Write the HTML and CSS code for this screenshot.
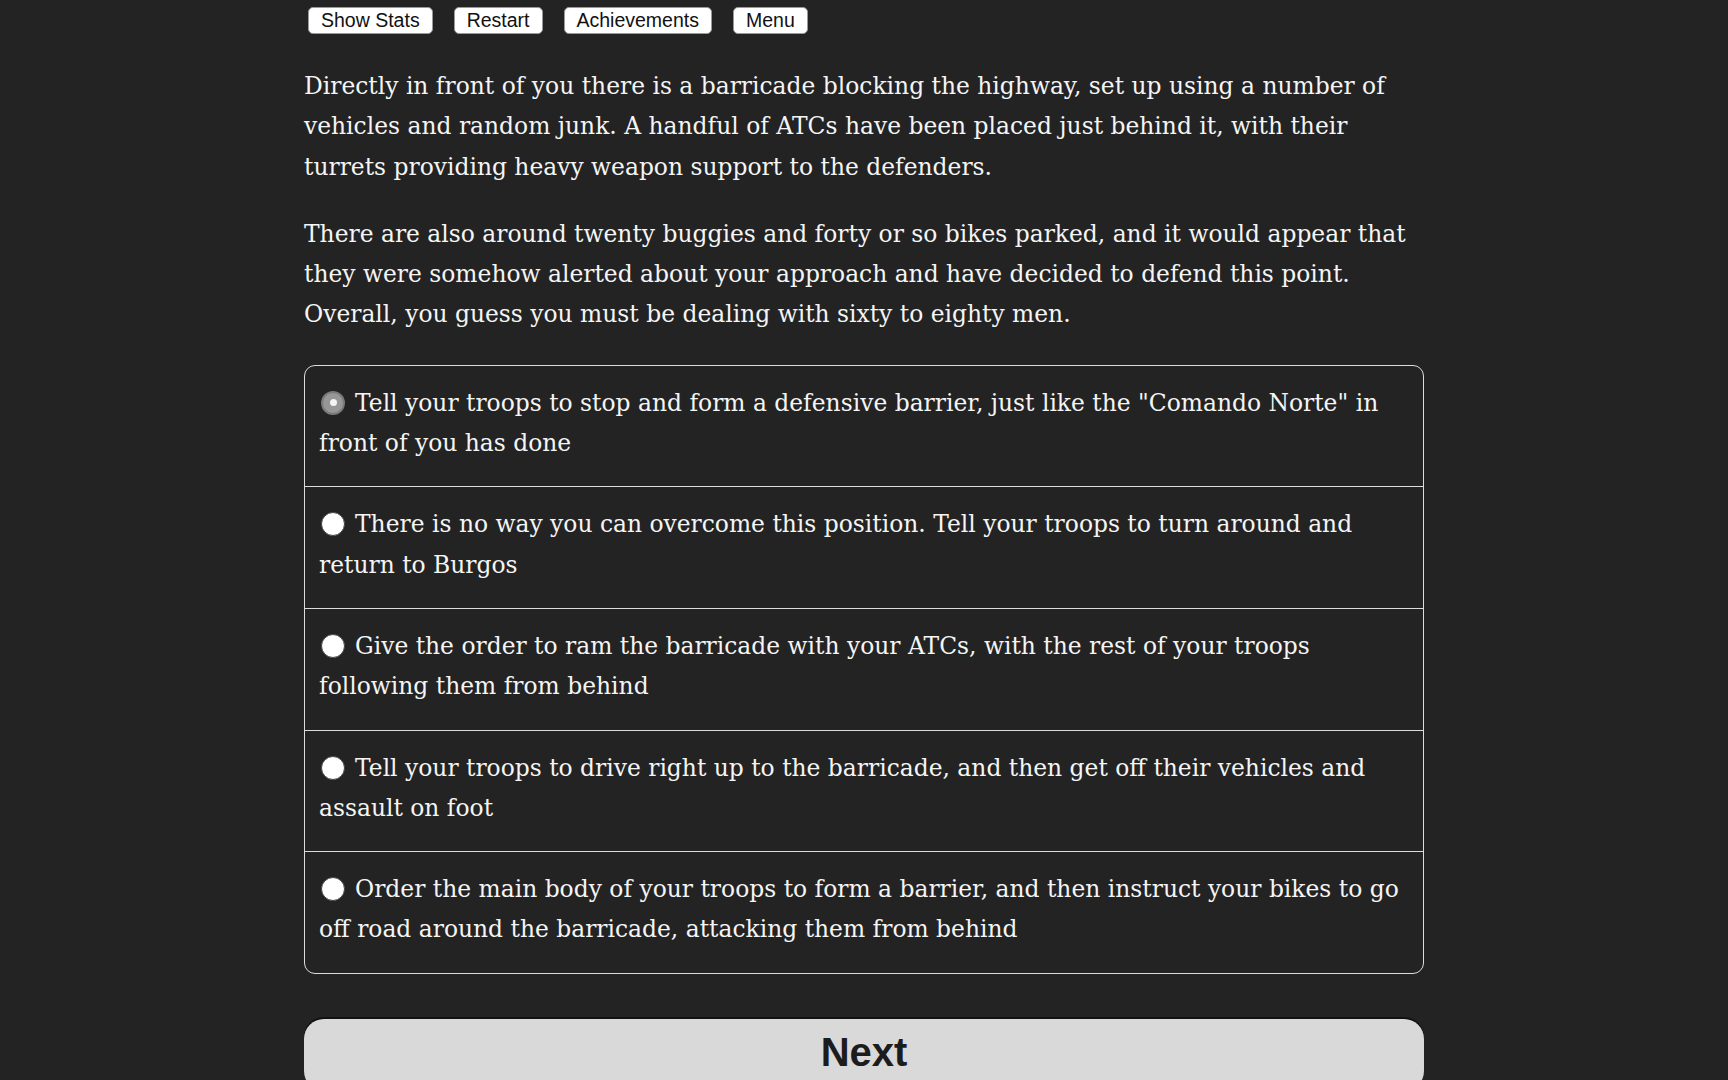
FILE: index.html
```html
<!DOCTYPE html>
<html lang="en">
<head>
<meta charset="utf-8">
<title>Story</title>
<link rel="stylesheet" href="styles.css">
</head>
<body>
<div class="page">
  <div class="toolbar">
    <button class="tool-btn">Show Stats</button>
    <button class="tool-btn">Restart</button>
    <button class="tool-btn">Achievements</button>
    <button class="tool-btn">Menu</button>
  </div>
  <div class="story">
    <p>Directly in front of you there is a barricade blocking the highway, set up using a number of vehicles and random junk. A handful of ATCs have been placed just behind it, with their turrets providing heavy weapon support to the defenders.</p>
    <p>There are also around twenty buggies and forty or so bikes parked, and it would appear that they were somehow alerted about your approach and have decided to defend this point. Overall, you guess you must be dealing with sixty to eighty men.</p>
  </div>
  <form class="choices">
    <label class="option"><input type="radio" name="choice" class="radio" checked>Tell your troops to stop and form a defensive barrier, just like the "Comando Norte" in front of you has done</label>
    <label class="option"><input type="radio" name="choice" class="radio">There is no way you can overcome this position. Tell your troops to turn around and return to Burgos</label>
    <label class="option"><input type="radio" name="choice" class="radio">Give the order to ram the barricade with your ATCs, with the rest of your troops following them from behind</label>
    <label class="option"><input type="radio" name="choice" class="radio">Tell your troops to drive right up to the barricade, and then get off their vehicles and assault on foot</label>
    <label class="option"><input type="radio" name="choice" class="radio">Order the main body of your troops to form a barrier, and then instruct your bikes to go off road around the barricade, attacking them from behind</label>
  </form>
  <button class="next-btn">Next</button>
</div>
</body>
</html>
```
FILE: styles.css
```css
html, body {
  margin: 0;
  padding: 0;
  background: #232323;
}
body {
  color: #f5f5f5;
  font-family: "DejaVu Serif", "Liberation Serif", serif;
}
.page {
  width: 1120px;
  margin: 0 auto;
}
.toolbar {
  display: flex;
  gap: 21px;
  padding: 7px 0 0 4px;
}
.tool-btn {
  height: 27px;
  padding: 0 12px;
  font-family: "Liberation Sans", Arial, sans-serif;
  font-size: 19.5px;
  color: #111;
  background: #fff;
  border: 1px solid #999;
  border-radius: 5px;
  line-height: 25px;
}
.story {
  margin-top: 32px;
}
.story p {
  margin: 0 0 27px 0;
  font-size: 23.4px;
  line-height: 40.3px;
}
.story p:last-child {
  margin-bottom: 0;
}
.choices {
  margin: 30px 0 0 0;
  border: 1px solid #dcdcdc;
  border-radius: 11px;
  overflow: hidden;
}
.option {
  display: block;
  padding: 17px 14px 23px 14px;
  font-size: 23.4px;
  line-height: 40.3px;
  border-top: 1px solid #dcdcdc;
  cursor: pointer;
}
.option:first-child {
  border-top: none;
}
.radio {
  -webkit-appearance: none;
  appearance: none;
  display: inline-block;
  box-sizing: border-box;
  width: 24px;
  height: 24px;
  margin: 0 10px 0 2px;
  vertical-align: -4px;
  border-radius: 50%;
  background: #fff;
  border: 1px solid #444;
  position: relative;
}
.radio:checked {
  background: #979797;
  border: 2px solid #7a7a7a;
}
.radio:checked::after {
  content: "";
  position: absolute;
  left: 50%;
  top: 50%;
  width: 7px;
  height: 7px;
  margin: -3.5px 0 0 -3.5px;
  border-radius: 50%;
  background: #f4f4f4;
}
.next-btn {
  display: block;
  width: 100%;
  height: 72px;
  margin-top: 45px;
  background: #d9d9d9;
  color: #1c1c1c;
  border: none;
  border-radius: 20px;
  box-shadow: 0 -2px 0 #111;
  font-family: "Liberation Sans", Arial, sans-serif;
  font-weight: bold;
  font-size: 40px;
  line-height: 66px;
  padding: 0 0 6px 0;
}
```
